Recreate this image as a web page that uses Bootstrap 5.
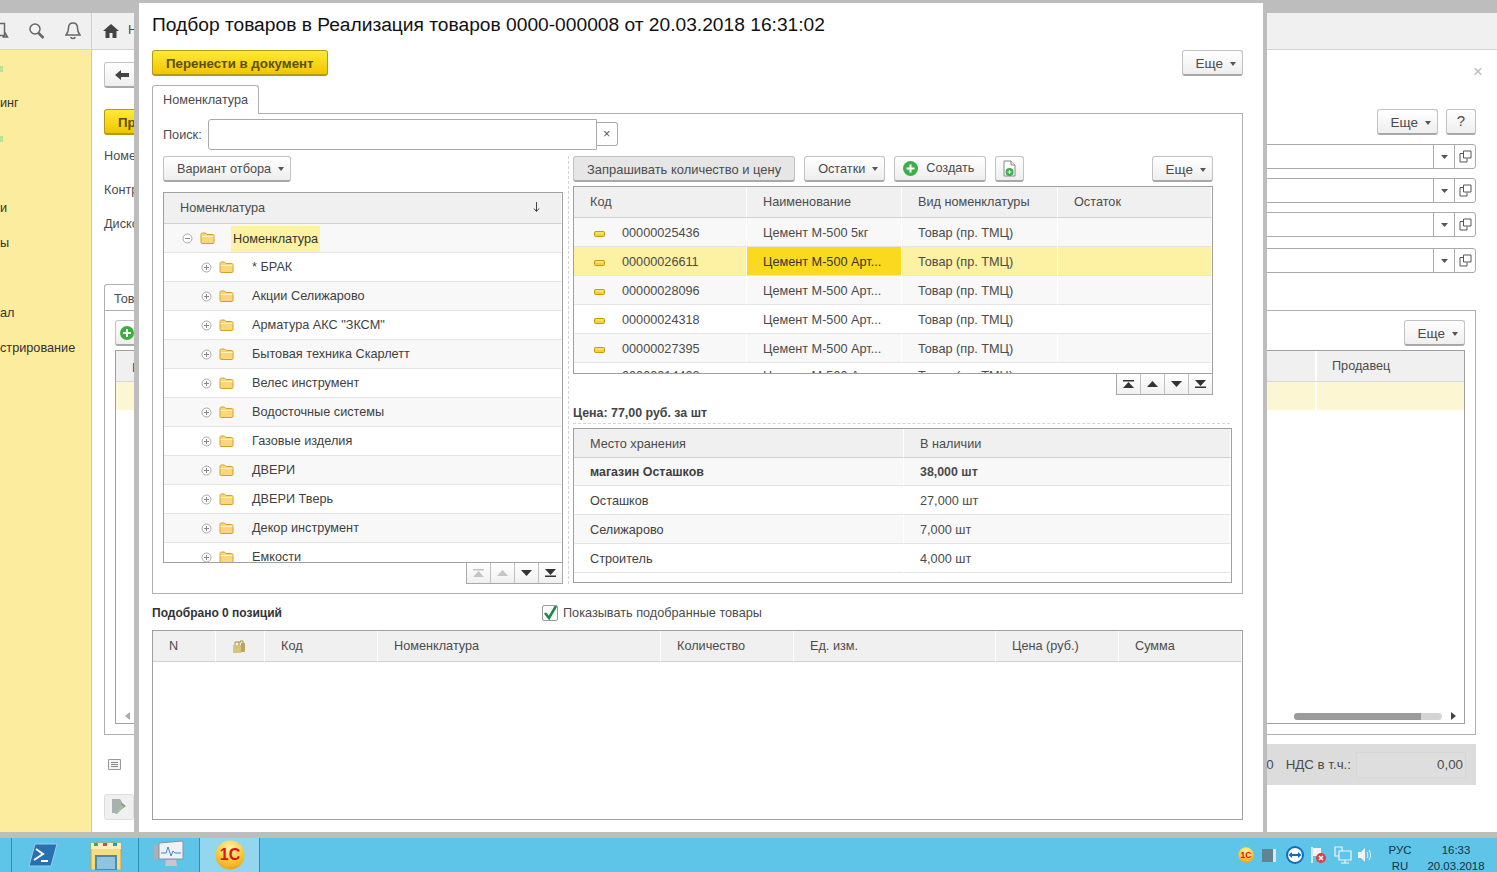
<!DOCTYPE html>
<html lang="ru">
<head>
  <meta charset="UTF-8" />
  <meta name="viewport" content="width=device-width, initial-scale=1" />
  <title>Подбор товаров</title>
  <link href="https://cdn.jsdelivr.net/npm/bootstrap@5.3.0/dist/css/bootstrap.min.css" rel="stylesheet" />
  <style>
    html, body { height: 100%; }
    body { width: 1497px; height: 872px; overflow: hidden; font-family: "Liberation Sans", Arial, sans-serif; font-size: 12.7px; color: #4b4b4b; background: #fff; }

    /* окно за модальным */
    .app { height: 838px; }
    .top-strip { height: 13px; background: #bdbdbd; }
    .toolbar { height: 37px; background: #f0f0f0; border-bottom: 1px solid #d4d4d4; }
    .tool-cell { width: 92px; border-right: 1px solid #d0d0d0; }
    .tool-cell .search-ico { margin-left: 18px; }
    .tool-cell .bell { margin-right: 10px; }
    .home { margin-left: 11px; margin-right: 9px; }
    .workarea { height: 788px; border-bottom: 6px solid #bdbdbd; }
    .side { width: 92px; background: #fbec9e; border-right: 1px solid #c8c8c8; padding-top: 16px; color: #333; }
    .side div { height: 35px; line-height: 20px; white-space: nowrap; }
    .side .dot { width: 3px; height: 6px; background: #b8e49a; }
    .side .d1 { margin-bottom: 21px; }
    .side .d2 { margin-top: 8px; margin-bottom: 56px; }
    .form-area { width: 1372px; margin-left: 12px; }
    .back-row-top { margin-top: 12px; }
    .btn-1c.back-btn { width: 60px; height: 26px; padding: 0 10px; }
    .close-x { color: #bbb; font-size: 17px; line-height: 20px; height: 20px; margin-right: -7px; }
    .form-top { margin-top: 21px; height: 26px; }
    .yellow { background: linear-gradient(#ffe93a, #f1c500); border: 1px solid #b59b12; border-bottom-width: 2px; border-radius: 3px; color: #5d4f00; font-weight: bold; font-size: 13.3px; padding: 2px 13px 0; height: 26px; --bs-btn-hover-color: #5d4f00; }
    .yellow.short { width: 60px; text-align: left; }
    .field-row { height: 25px; margin-top: 9px; }
    .field-row.last { margin-top: 11px; }
    .field { width: 300px; height: 25px; border: 1px solid #aaa; border-radius: 3px; background: #fff; }
    .field span { width: 21px; border-left: 1px solid #aaa; }
    .tab-back { width: 80px; height: 26px; margin-top: 11px; border: 1px solid #b0b0b0; border-bottom: 0; border-radius: 3px 3px 0 0; padding: 5px 9px; }
    .panel-back { height: 425px; border: 1px solid #b0b0b0; padding: 9px 10px; }
    .back-table { height: 374px; border: 1px solid #a0a0a0; }
    .back-head { height: 31px; background: #f0f0f0; border-bottom: 1px solid #d8d8d8; }
    .back-row { height: 28px; background: #fdf6d3; }
    .back-row .cell-a, .back-head .cell-a { width: 149px; border-left: 2px solid #fff; padding: 6px 15px; }
    .scroll-line { padding: 0 8px 3px 9px; }
    .scroll-track { width: 148px; height: 7px; background: #d4d4d4; border-radius: 4px; margin-right: 9px; }
    .scroll-thumb { height: 7px; background: #9b9b9b; width: 127px; border-radius: 4px 0 0 4px; }
    .total-wrap { height: 41px; margin-top: 9px; }
    .total-bar { width: 1340px; background: #dcdcdc; padding: 6px 10px; font-size: 13.3px; }
    .total-val { width: 110px; height: 26px; background: #dedede; border: 1px solid #d6d6d6; padding-right: 2px; margin-left: 5px; }
    .note-btn { width: 30px; height: 26px; margin-top: 9px; background: #f0f0f0; border: 1px solid #ddd; border-radius: 3px; }

    /* окно подбора */
    .picker { left: 134px; top: 0; width: 1133px; height: 838px; background: #fff; border: solid #bdbdbd; border-width: 3px 4px 6px 5px; padding: 0 20px 0 13px; }
    .picker h1 { font-size: 19.2px; font-weight: normal; color: #111; margin: 10px 0 0; height: 37px; line-height: 23px; white-space: nowrap; }
    .btn-1c { height: 26px; padding: 3px 13px 0; font-size: 12.7px; color: #4b4b4b; background: linear-gradient(#fff, #eeeeee); border: 1px solid #c2c2c2; border-bottom: 2px solid #a8a8a8; border-radius: 3px; white-space: nowrap; --bs-btn-hover-color: #4b4b4b; }
    .btn-1c.pressed { background: #e6e6e6; font-size: 12.95px; }
    .btn-1c.dropdown-toggle { padding-right: 6px; }
    .btn-1c.more { font-size: 13.5px; }
    .btn-1c.help { width: 30px; padding: 0; font-size: 15px; }
    .btn-1c.file-btn { padding: 0 7px; }
    .btn-1c.create-btn { padding: 0 11px 0 8px; }
    .btn-1c.dropdown-toggle::after { border-top: 4px solid #555; border-left: 3px solid transparent; border-right: 3px solid transparent; border-bottom: 0; margin-left: 7px; vertical-align: 2px; }
    .tab-1c { width: 107px; height: 29px; margin-top: 9px; border: 1px solid #b0b0b0; border-bottom: 0; border-radius: 3px 3px 0 0; background: #fff; padding: 5px 10px; margin-bottom: -1px; position: relative; z-index: 1; }
    .panel-1c { height: 481px; border: 1px solid #b0b0b0; padding: 8px 10px 0; }
    .search { height: 24px; }
    .search label { padding-top: 3px; }
    .search input { width: 389px; height: 24px; margin-left: 6px; border: 1px solid #aaa; border-radius: 3px 0 0 3px; }
    .search button { width: 21px; height: 24px; border: 1px solid #aaa; border-left: 0; border-radius: 0 3px 3px 0; background: #fff; padding: 0; color: #555; line-height: 18px; }
    .left-col { width: 400px; }
    .right-col { width: 664px; margin-left: 5px; padding-left: 4px; border-left: 1px dashed #d4d4d4; }
    .main-row { margin-top: 10px; height: 428px; }
    .grid { border: 1px solid #a0a0a0; overflow: hidden; background: #fff; }
    .grid table { table-layout: fixed; width: 100%; margin: 0; border-collapse: separate; border-spacing: 0; --bs-table-bg: transparent; --bs-table-color: #4b4b4b; }
    .grid th, .grid td { font-weight: normal; font-size: 12.7px; color: #4b4b4b; padding: 3px 0 0 16px; height: 29px; vertical-align: middle; white-space: nowrap; overflow: hidden; border: 0; border-bottom: 1px solid #e4e4e4; }
    .grid th { height: 31px; padding-top: 1px; background: #f0f0f0; border-bottom: 1px solid #d0d0d0; border-right: 1px solid #fff; }
    .grid td { border-right: 1px solid #fff; }
    .grid tbody tr:nth-child(odd) td { background: #f8f8f8; }
    .grid tbody tr.sel td { background: #fdf1a3; }
    .grid tbody tr.sel td.cur { background: #fbd91e; color: #333; }
    #tree { height: 371px; margin-top: 10px; }
    #tree td { padding: 0; color: #3f3f3f; }
    #tree th { position: relative; padding-left: 16px; }
    .sort-arrow { position: absolute; right: 21px; top: 8px; }
    .tree-line { padding-left: 37px; height: 28px; }
    .tree-line svg + svg { margin-left: 7px; }
    .tree-line .tree-name { margin-left: 18px; margin-top: 2px; }
    .tree-line.root { padding-left: 18px; }
    .tree-line.root .tree-name { background: #fdf1a3; padding: 0 2px; height: 26px; line-height: 26px; margin-left: 16px; color: #333; }
    .pager { width: 97px; height: 21px; border: 1px solid #a8a8a8; border-top: 0; }
    .pager span { flex: 1; background: linear-gradient(#fff, #f0f0f0); border-left: 1px solid #c0c0c0; }
    .pager span:first-child { border-left: 0; }
    .tool-row, .goods-block { width: 640px; }
    .tool-row .btn + .btn { margin-left: 9px; }
    .tool-row .btn.tool-more { margin-left: auto; }
    .goods-block { margin-top: 4px; }
    #goods { height: 188px; }
    #goods col:nth-child(1) { width: 173px; }
    #goods col:nth-child(2) { width: 155px; }
    #goods col:nth-child(3) { width: 156px; }
    #goods td:first-child { padding-left: 20px; }
    #goods td:first-child span { margin-left: 17px; }
    #goods tbody tr:last-child td { padding-top: 0; }
    .price { height: 28px; padding-top: 9px; font-size: 12.4px; font-weight: bold; color: #444; }
    .dash { height: 1px; border-top: 1px dashed #d4d4d4; width: 657px; margin-bottom: 4px; }
    #stock { height: 155px; }
    #stock th { height: 29px; padding-top: 3px; }
    #stock tbody tr:first-child td { height: 28px; }
    #stock col:nth-child(1) { width: 330px; }
    #stock td:first-child { color: #3f3f3f; }
    #stock b { font-size: 12.4px; }
    .picked { height: 20px; margin-top: 9px; margin-bottom: 7px; }
    .picked strong { width: 390px; font-size: 12px; color: #333; }
    .picked label { padding-top: 1px; }
    .form-check-input.chk { width: 16px; height: 16px; margin: 0 5px 0 0; border: 1px solid #999; border-radius: 2px; background-color: #fff; float: none; }
    .form-check-input.chk:checked { background-color: #fff; border-color: #999; background-size: 16px 16px; background-image: url("data:image/svg+xml,%3csvg xmlns='http://www.w3.org/2000/svg' viewBox='0 0 16 16'%3e%3cpath d='M3 8l4 5 7-12' fill='none' stroke='%23168a4a' stroke-width='2.600'/%3e%3c/svg%3e"); }
    #chosen { height: 190px; }
    #chosen col:nth-child(1) { width: 63px; }
    #chosen col:nth-child(2) { width: 49px; }
    #chosen col:nth-child(3) { width: 113px; }
    #chosen col:nth-child(4) { width: 283px; }
    #chosen col:nth-child(5) { width: 133px; }
    #chosen col:nth-child(6) { width: 202px; }
    #chosen col:nth-child(7) { width: 123px; }

    /* панель задач */
    .taskbar { height: 34px; background: #5ec5e8; color: #12303f; font-size: 11.4px; }
    .task { height: 34px; border-left: 1px solid #2e8fb4; }
    .task.t0 { width: 11px; border: 0; }
    .task.t1 { width: 127px; }
    .task.t2 { width: 60px; }
    .task.t3 { width: 61px; background: #93d7ef; border-right: 1px solid #2e8fb4; margin-left: 1px; }
    .tray { margin-left: auto; padding-right: 6px; padding-top: 6px; line-height: 16px; }
    .tray .lang { width: 44px; margin-left: 5px; }
    .tray .clock { width: 70px; margin-left: -1px; }
    .tray-icons { margin-top: -6px; }
    .tray-icons svg:nth-child(2) { margin-left: 8px; }
    .tray-icons svg:nth-child(3) { margin-left: 10px; }
    .tray-icons svg:nth-child(4) { margin-left: 6px; }
    .tray-icons svg:nth-child(5) { margin-left: 8px; }
    .tray-icons svg:nth-child(6) { margin-left: 5px; }
  </style>
</head>
<body>

  <svg width="0" height="0" class="position-absolute">
    <symbol id="folder" viewBox="0 0 15 12"><path d="M1 2.500c0-1 .5-1.500 1.500-1.500h3l1.500 1.500h5.500c1 0 1.500.5 1.500 1.500v6.500c0 .5-.5 1-1 1H2c-.5 0-1-.5-1-1z" fill="#fcd67a" stroke="#d89e2c"/><path d="M1.500 4.500h12" stroke="#fff3c4"/></symbol>
    <symbol id="plus" viewBox="0 0 11 11"><circle cx="5.500" cy="5.500" r="4.500" fill="#fff" stroke="#a9a9a9"/><path d="M3 5.500h5M5.500 3v5" stroke="#888"/></symbol>
    <symbol id="minus" viewBox="0 0 11 11"><circle cx="5.500" cy="5.500" r="4.500" fill="#fff" stroke="#a9a9a9"/><path d="M3 5.500h5" stroke="#888"/></symbol>
    <symbol id="item" viewBox="0 0 11 6"><rect x=".5" y=".5" width="10" height="5" rx="1" fill="#f5cf3c" stroke="#c49a10"/><path d="M2 2h7" stroke="#fff0a0"/></symbol>
    <symbol id="first" viewBox="0 0 11 8"><path d="M0 0h11v1.500H0zM5.500 2L11 8H0z"/></symbol>
    <symbol id="up" viewBox="0 0 11 6"><path d="M5.500 0L11 6H0z"/></symbol>
    <symbol id="down" viewBox="0 0 11 6"><path d="M0 0h11L5.500 6z"/></symbol>
    <symbol id="last" viewBox="0 0 11 8"><path d="M0 0h11L5.500 6zM0 6.500h11V8H0z"/></symbol>
    <symbol id="open" viewBox="0 0 13 13"><path d="M4.500 1h7.500v7H4.500z" fill="#fff" stroke="#555"/><path d="M4.500 3.500H1V12h7V8.500" fill="none" stroke="#555"/></symbol>
    <symbol id="logo" viewBox="0 0 30 30"><defs><radialGradient id="gold" cx=".5" cy=".25" r=".8"><stop offset="0" stop-color="#fff3a8"/><stop offset=".6" stop-color="#fbc832"/><stop offset="1" stop-color="#ee9d12"/></radialGradient></defs><circle cx="15" cy="15" r="14.500" fill="url(#gold)"/><text x="15" y="20" text-anchor="middle" font-family="Liberation Sans, sans-serif" font-weight="bold" font-size="16" fill="#d8141c">1С</text></symbol>
  </svg>

  <div class="app">
    <div class="top-strip"></div>
    <div class="toolbar d-flex align-items-center">
      <div class="tool-cell h-100 d-flex align-items-center flex-shrink-0">
        <svg width="10" height="20" viewBox="0 0 10 20"><path d="M-4 2.500h8.500v12H-4M4.500 11l3 5h-5" fill="none" stroke="#666" stroke-width="1.500"/></svg>
        <svg class="search-ico" width="17" height="18" viewBox="0 0 17 18"><circle cx="7" cy="7" r="5" fill="#f4f4f4" stroke="#666" stroke-width="1.500"/><path d="M10.500 11l5 5" stroke="#666" stroke-width="2.500"/></svg>
        <svg class="ms-auto bell" width="16" height="18" viewBox="0 0 16 18"><path d="M8 1c-3 0-4.500 2-4.500 5 0 4-1 5-2.500 7h14c-1.500-2-2.500-3-2.500-7 0-3-1.500-5-4.500-5zM6 15c0 2 4 2 4 0" fill="none" stroke="#666" stroke-width="1.500"/></svg>
      </div>
      <svg class="home" width="16" height="14" viewBox="0 0 16 14"><path d="M8 0L0 7h2.500v7h4V9h3v5h4V7H16z" fill="#444"/></svg>
      <span>Н</span>
    </div>

    <div class="workarea d-flex">
      <div class="side flex-shrink-0">
        <div class="dot d1"></div>
        <div>инг</div>
        <div class="dot d2"></div>
        <div>и</div>
        <div>ы</div>
        <div></div>
        <div>ал</div>
        <div>стрирование</div>
      </div>

      <div class="form-area flex-shrink-0">
        <div class="back-row-top d-flex align-items-start justify-content-between">
          <button class="btn btn-1c back-btn text-start" type="button"><svg width="14" height="10" viewBox="0 0 14 10"><path d="M0 5l6-5v3h8v4H6v3z" fill="#444"/></svg></button>
          <span class="close-x">×</span>
        </div>
        <div class="form-top d-flex">
          <button class="btn yellow short" type="button">Пр</button>
          <button class="btn btn-1c more dropdown-toggle ms-auto" type="button">Еще</button>
          <button class="btn btn-1c help ms-2" type="button">?</button>
        </div>
        <div class="field-row d-flex justify-content-between align-items-center">Номер
          <div class="field d-flex justify-content-end"><span class="d-flex align-items-center justify-content-center"><svg width="7" height="4"><use href="#down" fill="#555"/></svg></span><span class="d-flex align-items-center justify-content-center"><svg width="13" height="13"><use href="#open"/></svg></span></div>
        </div>
        <div class="field-row d-flex justify-content-between align-items-center">Контрагент
          <div class="field d-flex justify-content-end"><span class="d-flex align-items-center justify-content-center"><svg width="7" height="4"><use href="#down" fill="#555"/></svg></span><span class="d-flex align-items-center justify-content-center"><svg width="13" height="13"><use href="#open"/></svg></span></div>
        </div>
        <div class="field-row d-flex justify-content-between align-items-center">Дисконт
          <div class="field d-flex justify-content-end"><span class="d-flex align-items-center justify-content-center"><svg width="7" height="4"><use href="#down" fill="#555"/></svg></span><span class="d-flex align-items-center justify-content-center"><svg width="13" height="13"><use href="#open"/></svg></span></div>
        </div>
        <div class="field-row last d-flex justify-content-end align-items-center">
          <div class="field d-flex justify-content-end"><span class="d-flex align-items-center justify-content-center"><svg width="7" height="4"><use href="#down" fill="#555"/></svg></span><span class="d-flex align-items-center justify-content-center"><svg width="13" height="13"><use href="#open"/></svg></span></div>
        </div>
        <div class="tab-back">Товары</div>
        <div class="panel-back">
          <div class="d-flex">
            <button class="btn btn-1c px-1 py-0" type="button"><svg width="14" height="14" viewBox="0 0 14 14"><circle cx="7" cy="7" r="7" fill="#3cae3c"/><path d="M3 7h8M7 3v8" stroke="#fff" stroke-width="2"/></svg></button>
            <button class="btn btn-1c more dropdown-toggle ms-auto" type="button">Еще</button>
          </div>
          <div class="back-table mt-1 d-flex flex-column">
            <div class="back-head d-flex justify-content-end"><div class="me-auto ps-3 pt-2">Н</div><div class="cell-a">Продавец</div></div>
            <div class="back-row d-flex justify-content-end"><div class="cell-a"></div></div>
            <div class="scroll-line mt-auto d-flex align-items-center">
              <svg class="me-auto" width="5" height="8" viewBox="0 0 5 8"><path d="M5 0L0 4l5 4z" fill="#aaa"/></svg>
              <div class="scroll-track"><div class="scroll-thumb"></div></div>
              <svg width="5" height="8" viewBox="0 0 5 8"><path d="M0 0l5 4-5 4z" fill="#444"/></svg>
            </div>
          </div>
        </div>
        <div class="total-wrap d-flex">
          <svg class="list-icon align-self-center ms-1" width="13" height="11" viewBox="0 0 13 11"><path d="M.5.5h12v10H.5z" fill="#f4f4f4" stroke="#999"/><path d="M3 3.500h7M3 5.500h7M3 7.500h7" stroke="#888"/></svg>
          <div class="total-bar d-flex justify-content-end align-items-center ms-auto">
            <span class="me-2">0,00</span>
            <span class="ms-1">НДС в т.ч.:</span>
            <div class="total-val d-flex align-items-center justify-content-end">0,00</div>
          </div>
        </div>
        <div class="note-btn d-flex align-items-center justify-content-center">
          <svg width="20" height="18" viewBox="0 0 20 18"><path d="M3 1h8l2 3v3l-5 8H3z" fill="#aab0ae"/><path d="M12 4l5 4-4 3z" fill="#8f9a94"/><path d="M6 16l7-9 2 2-7 7z" fill="#a5bd9a"/></svg>
        </div>
      </div>
    </div>
  </div>

  <div class="picker position-absolute">
    <h1>Подбор товаров в Реализация товаров 0000-000008 от 20.03.2018 16:31:02</h1>
    <div class="d-flex">
      <button class="btn yellow" type="button">Перенести в документ</button>
      <button class="btn btn-1c more dropdown-toggle ms-auto" type="button">Еще</button>
    </div>
    <div class="tab-1c">Номенклатура</div>
    <div class="panel-1c">
      <div class="search d-flex align-items-center">
        <label for="poisk">Поиск:</label>
        <input id="poisk" class="form-control-sm" type="text" />
        <button type="button">×</button>
      </div>
      <div class="main-row d-flex">
        <div class="left-col">
          <button class="btn btn-1c dropdown-toggle" type="button">Вариант отбора</button>
          <div id="tree" class="grid">
            <table class="table">
              <thead><tr><th>Номенклатура<svg class="sort-arrow" width="7" height="12" viewBox="0 0 7 12"><path d="M3.500 1v9M1 7.500l2.500 3 2.500-3" fill="none" stroke="#444"/></svg></th></tr></thead>
              <tbody>
                <tr><td><div class="tree-line root d-flex align-items-center"><svg width="11" height="11"><use href="#minus"/></svg><svg width="15" height="12"><use href="#folder"/></svg><span class="tree-name">Номенклатура</span></div></td></tr>
                <tr><td><div class="tree-line d-flex align-items-center"><svg width="11" height="11"><use href="#plus"/></svg><svg width="15" height="12"><use href="#folder"/></svg><span class="tree-name">* БРАК</span></div></td></tr>
                <tr><td><div class="tree-line d-flex align-items-center"><svg width="11" height="11"><use href="#plus"/></svg><svg width="15" height="12"><use href="#folder"/></svg><span class="tree-name">Акции Селижарово</span></div></td></tr>
                <tr><td><div class="tree-line d-flex align-items-center"><svg width="11" height="11"><use href="#plus"/></svg><svg width="15" height="12"><use href="#folder"/></svg><span class="tree-name">Арматура АКС "ЗКСМ"</span></div></td></tr>
                <tr><td><div class="tree-line d-flex align-items-center"><svg width="11" height="11"><use href="#plus"/></svg><svg width="15" height="12"><use href="#folder"/></svg><span class="tree-name">Бытовая техника Скарлетт</span></div></td></tr>
                <tr><td><div class="tree-line d-flex align-items-center"><svg width="11" height="11"><use href="#plus"/></svg><svg width="15" height="12"><use href="#folder"/></svg><span class="tree-name">Велес инструмент</span></div></td></tr>
                <tr><td><div class="tree-line d-flex align-items-center"><svg width="11" height="11"><use href="#plus"/></svg><svg width="15" height="12"><use href="#folder"/></svg><span class="tree-name">Водосточные системы</span></div></td></tr>
                <tr><td><div class="tree-line d-flex align-items-center"><svg width="11" height="11"><use href="#plus"/></svg><svg width="15" height="12"><use href="#folder"/></svg><span class="tree-name">Газовые изделия</span></div></td></tr>
                <tr><td><div class="tree-line d-flex align-items-center"><svg width="11" height="11"><use href="#plus"/></svg><svg width="15" height="12"><use href="#folder"/></svg><span class="tree-name">ДВЕРИ</span></div></td></tr>
                <tr><td><div class="tree-line d-flex align-items-center"><svg width="11" height="11"><use href="#plus"/></svg><svg width="15" height="12"><use href="#folder"/></svg><span class="tree-name">ДВЕРИ Тверь</span></div></td></tr>
                <tr><td><div class="tree-line d-flex align-items-center"><svg width="11" height="11"><use href="#plus"/></svg><svg width="15" height="12"><use href="#folder"/></svg><span class="tree-name">Декор инструмент</span></div></td></tr>
                <tr><td><div class="tree-line d-flex align-items-center"><svg width="11" height="11"><use href="#plus"/></svg><svg width="15" height="12"><use href="#folder"/></svg><span class="tree-name">Емкости</span></div></td></tr>
              </tbody>
            </table>
          </div>
          <div class="pager d-flex ms-auto">
            <span class="d-flex align-items-center justify-content-center"><svg width="11" height="8"><use href="#first" fill="#c4c4c4"/></svg></span>
            <span class="d-flex align-items-center justify-content-center"><svg width="11" height="6"><use href="#up" fill="#c4c4c4"/></svg></span>
            <span class="d-flex align-items-center justify-content-center"><svg width="11" height="6"><use href="#down" fill="#333"/></svg></span>
            <span class="d-flex align-items-center justify-content-center"><svg width="11" height="8"><use href="#last" fill="#333"/></svg></span>
          </div>
        </div>

        <div class="right-col">
          <div class="d-flex tool-row">
            <button class="btn btn-1c pressed" type="button">Запрашивать количество и цену</button>
            <button class="btn btn-1c dropdown-toggle" type="button">Остатки</button>
            <button class="btn btn-1c create-btn d-flex align-items-center gap-2" type="button"><svg width="15" height="15" viewBox="0 0 15 15"><circle cx="7.500" cy="7.500" r="7.500" fill="#3cae4a"/><path d="M3.500 7.500h8M7.500 3.500v8" stroke="#fff" stroke-width="2"/></svg>Создать</button>
            <button class="btn btn-1c file-btn" type="button"><svg width="13" height="17" viewBox="0 0 13 17"><path d="M1 1h7l4 4v11H1z" fill="#fff" stroke="#888"/><path d="M8 1v4h4" fill="#eee" stroke="#888"/><circle cx="6.500" cy="12" r="4" fill="#3cae4a"/><path d="M4.500 12h4M6.500 10v4" stroke="#fff"/></svg></button>
            <button class="btn btn-1c more dropdown-toggle tool-more" type="button">Еще</button>
          </div>
          <div class="goods-block">
            <div id="goods" class="grid">
              <table class="table">
                <colgroup><col /><col /><col /><col /></colgroup>
                <thead><tr><th>Код</th><th>Наименование</th><th>Вид номенклатуры</th><th>Остаток</th></tr></thead>
                <tbody>
                  <tr><td><svg width="11" height="6"><use href="#item"/></svg><span>00000025436</span></td><td>Цемент М-500 5кг</td><td>Товар (пр. ТМЦ)</td><td></td></tr>
                  <tr class="sel"><td><svg width="11" height="6"><use href="#item"/></svg><span>00000026611</span></td><td class="cur">Цемент М-500 Арт...</td><td>Товар (пр. ТМЦ)</td><td></td></tr>
                  <tr><td><svg width="11" height="6"><use href="#item"/></svg><span>00000028096</span></td><td>Цемент М-500 Арт...</td><td>Товар (пр. ТМЦ)</td><td></td></tr>
                  <tr><td><svg width="11" height="6"><use href="#item"/></svg><span>00000024318</span></td><td>Цемент М-500 Арт...</td><td>Товар (пр. ТМЦ)</td><td></td></tr>
                  <tr><td><svg width="11" height="6"><use href="#item"/></svg><span>00000027395</span></td><td>Цемент М-500 Арт...</td><td>Товар (пр. ТМЦ)</td><td></td></tr>
                  <tr><td><svg width="11" height="6"><use href="#item"/></svg><span>00000014403</span></td><td>Цемент М-500 Арт...</td><td>Товар (пр. ТМЦ)</td><td></td></tr>
                </tbody>
              </table>
            </div>
            <div class="pager d-flex ms-auto">
              <span class="d-flex align-items-center justify-content-center"><svg width="11" height="8"><use href="#first" fill="#333"/></svg></span>
              <span class="d-flex align-items-center justify-content-center"><svg width="11" height="6"><use href="#up" fill="#333"/></svg></span>
              <span class="d-flex align-items-center justify-content-center"><svg width="11" height="6"><use href="#down" fill="#333"/></svg></span>
              <span class="d-flex align-items-center justify-content-center"><svg width="11" height="8"><use href="#last" fill="#333"/></svg></span>
            </div>
          </div>
          <div class="price">Цена: 77,00 руб. за шт</div>
          <div class="dash"></div>
          <div id="stock" class="grid">
            <table class="table">
              <colgroup><col /><col /></colgroup>
              <thead><tr><th>Место хранения</th><th>В наличии</th></tr></thead>
              <tbody>
                <tr><td><b>магазин Осташков</b></td><td><b>38,000 шт</b></td></tr>
                <tr><td>Осташков</td><td>27,000 шт</td></tr>
                <tr><td>Селижарово</td><td>7,000 шт</td></tr>
                <tr><td>Строитель</td><td>4,000 шт</td></tr>
              </tbody>
            </table>
          </div>
        </div>
      </div>
    </div>
    <div class="picked d-flex align-items-center">
      <strong>Подобрано 0 позиций</strong>
      <input class="form-check-input chk" type="checkbox" id="showPicked" checked />
      <label for="showPicked">Показывать подобранные товары</label>
    </div>
    <div id="chosen" class="grid">
      <table class="table">
        <colgroup><col /><col /><col /><col /><col /><col /><col /><col /></colgroup>
        <thead><tr><th>N</th><th><svg width="14" height="14" viewBox="0 0 14 14"><path d="M1 5h8v8H1z" fill="#d8c27c"/><path d="M9 3h4v9H9z" fill="#bba65e"/><path d="M3 5V2h4v3M8 3V1h3v2" fill="none" stroke="#a08c48"/></svg></th><th>Код</th><th>Номенклатура</th><th>Количество</th><th>Ед. изм.</th><th>Цена (руб.)</th><th>Сумма</th></tr></thead>
      </table>
    </div>
  </div>

  <div class="taskbar d-flex align-items-center">
    <div class="task t0"></div>
    <div class="task t1 d-flex align-items-center justify-content-between px-3">
      <svg width="30" height="26" viewBox="0 0 30 26"><path d="M7 2h22l-6 22H1z" fill="#2a6fb0" stroke="#9ccbec"/><path d="M8 7l7 5-9 6M13 19h7" fill="none" stroke="#fff" stroke-width="2"/></svg>
      <svg width="32" height="30" viewBox="0 0 32 30"><path d="M1 3h30v27H1z" fill="#f7dc82" stroke="#c6a24a"/><path d="M1 3h30v6H1z" fill="#fbeeb8"/><rect x="4" y="3" width="4" height="3" fill="#3cae4a"/><rect x="13" y="3" width="4" height="3" fill="#d84a3c"/><rect x="23" y="3" width="4" height="3" fill="#3a8ad8"/><rect x="6" y="16" width="20" height="14" fill="#8fc4de" stroke="#4a8ab0" stroke-width="2"/></svg>
    </div>
    <div class="task t2 d-flex align-items-center justify-content-center">
      <svg width="31" height="30" viewBox="0 0 31 30"><path d="M1 6l5-2v14l-5 2z" fill="#aab0b4"/><path d="M6 3l24-2v18H6z" fill="#eef2f4" stroke="#8a9298"/><path d="M8 13h5l2-6 3 9 2-5 2 2h6" fill="none" stroke="#3a8ad8"/><path d="M13 20h10l1 6H12z" fill="#c4c8cc"/></svg>
    </div>
    <div class="task t3 d-flex align-items-center justify-content-center">
      <svg width="30" height="30"><use href="#logo"/></svg>
    </div>
    <div class="tray d-flex align-items-center">
      <div class="tray-icons d-flex align-items-center">
        <svg width="16" height="16"><use href="#logo"/></svg>
        <svg width="14" height="13" viewBox="0 0 14 13"><rect width="11" height="13" fill="#5f8494"/><rect x="11" width="3" height="13" fill="#dbe8ee"/></svg>
        <svg width="18" height="18" viewBox="0 0 18 18"><circle cx="9" cy="9" r="9" fill="#0e6cc4"/><circle cx="9" cy="9" r="7" fill="#fff"/><path d="M2.500 9l3.500-3v2h6V6l3.500 3-3.500 3v-2H6v2z" fill="#0e6cc4"/></svg>
        <svg width="16" height="18" viewBox="0 0 16 18"><path d="M2 1v16" stroke="#f4f4f4" stroke-width="1.500"/><path d="M3 2h8v8H3z" fill="#f4f4f4"/><circle cx="11" cy="12" r="5" fill="#d8404a"/><path d="M9 10l4 4M13 10l-4 4" stroke="#fff" stroke-width="1.500"/></svg>
        <svg width="18" height="18" viewBox="0 0 18 18"><path d="M1 1h7v9H1z" fill="none" stroke="#f4f4f4" stroke-width="1.200"/><path d="M5 5h12v9H5z" fill="#5ec5e8" stroke="#f4f4f4" stroke-width="1.200"/><path d="M11 14v3M7 17h8" stroke="#f4f4f4" stroke-width="1.200"/></svg>
        <svg width="16" height="16" viewBox="0 0 16 16"><path d="M1 5h3l4-4v14l-4-4H1z" fill="#f4f4f4"/><path d="M10 5c1 2 1 4 0 6M12 3c2 3 2 7 0 10" fill="none" stroke="#f4f4f4"/></svg>
      </div>
      <div class="lang text-center"><div>РУС</div><div>RU</div></div>
      <div class="clock text-center"><div>16:33</div><div>20.03.2018</div></div>
    </div>
  </div>

  <script src="https://cdn.jsdelivr.net/npm/bootstrap@5.3.0/dist/js/bootstrap.bundle.min.js"></script>
</body>
</html>
